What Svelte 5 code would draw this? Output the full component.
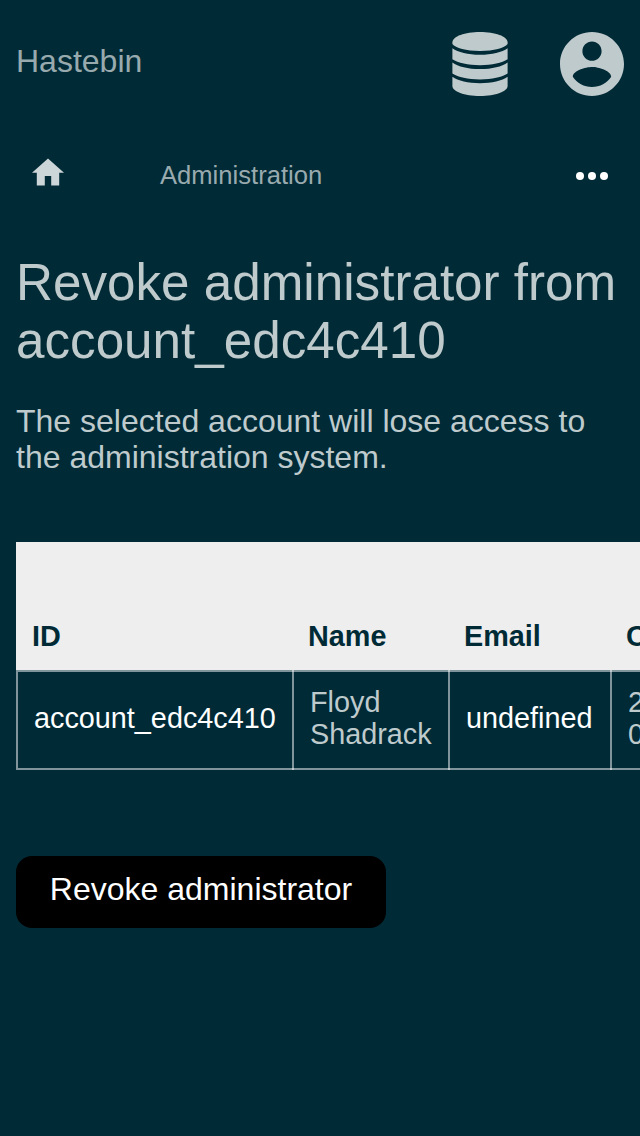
<script>
  const account = { id: 'account_edc4c410', name: 'Floyd Shadrack', email: 'undefined', created: '2023-01-02 03:42' };
</script>

<div class="page">
  <header>
    <span class="brand">Hastebin</span>
    <div class="tools">
      <svg width="56" height="64" viewBox="0 0 56 64" aria-label="Storage">
        <path d="M28 0C13 0 .4 4.2.4 10.5v1.6C3.5 16 14 19.1 28 19.1S52.5 16 55.6 12.1v-1.6C55.6 4.2 43 0 28 0Z" />
        <path d="M.4 16.2C6 20.3 16 22.7 28 22.7s22-2.4 27.6-6.5v11.1c-5.6 3.7-15.6 5.9-27.6 5.9S6 31 .4 27.3Z" />
        <path d="M.4 30.5c5.6 4.1 15.6 6.6 27.6 6.6s22-2.5 27.6-6.6v11c-5.6 3.7-15.6 5.9-27.6 5.9S6 45.2.4 41.5Z" />
        <path d="M.4 44.8C6 48.9 16 51.2 28 51.2s22-2.3 27.6-6.4V54c0 5.4-12 10-27.6 10S.4 59.4.4 54Z" />
      </svg>
      <svg width="64" height="64" viewBox="2 2 20 20" aria-label="Account">
        <path d="M12 2C6.48 2 2 6.48 2 12s4.48 10 10 10 10-4.48 10-10S17.52 2 12 2zm0 3c1.66 0 3 1.34 3 3s-1.34 3-3 3-3-1.34-3-3 1.34-3 3-3zm0 14.2c-2.5 0-4.71-1.28-6-3.22.03-1.99 4-3.08 6-3.08 1.99 0 5.97 1.09 6 3.08-1.29 1.94-3.5 3.22-6 3.22z" />
      </svg>
    </div>
  </header>

  <nav>
    <svg class="home" width="32" height="28" viewBox="2 2.75 20 17.5" aria-label="Home">
      <path d="M10 20v-6h4v6h5v-8h3L12 3 2 12h3v8z" />
    </svg>
    <span class="crumb">Administration</span>
    <svg class="more" width="32" height="8" viewBox="0 0 32 8" aria-label="More">
      <circle cx="4" cy="4" r="4" /><circle cx="16" cy="4" r="4" /><circle cx="28" cy="4" r="4" />
    </svg>
  </nav>

  <main>
    <h1>Revoke administrator from account_edc4c410</h1>
    <p>The selected account will lose access to the administration system.</p>
    <div class="scroller">
      <div class="table">
        <div class="head">
          <span>ID</span><span>Name</span><span>Email</span><span>Created</span>
        </div>
        <div class="row">
          <div class="cell link">{account.id}</div>
          <div class="cell">{account.name}</div>
          <div class="cell link">{account.email}</div>
          <div class="cell">{account.created}</div>
        </div>
      </div>
    </div>
    <button>Revoke administrator</button>
  </main>
</div>

<style>
  :global(body) { background: #002b36; }
  .page {
    box-sizing: border-box;
    min-height: 1136px;
    overflow: hidden;
    background: #002b36;
    color: #bfcacd;
    font: 32px/36px "Liberation Sans", Arial, sans-serif;
  }
  svg { display: block; fill: currentColor; }
  header {
    display: flex;
    justify-content: space-between;
    padding: 32px 16px 0;
    height: 96px;
  }
  .brand { padding-top: 11px; color: #99aaaf; }
  .tools { display: flex; gap: 52px; }
  nav {
    display: flex;
    align-items: center;
    height: 96px;
    padding: 0 32px;
  }
  .home { color: #ccd5d7; margin-top: -8px; }
  .crumb { margin: -2px 0 0 96px; font-size: 25.6px; color: #99aaaf; }
  .more { margin-left: auto; color: #fff; }
  main { padding: 30px 0 0 16px; }
  h1 { margin: 0; font-size: 51.2px; line-height: 58px; font-weight: 400; }
  p { margin: 33px 0 0; width: 608px; }
  .scroller { margin-top: 67px; overflow: hidden; }
  .table { width: 768px; font-size: 28.8px; line-height: 32px; }
  .head, .row { display: grid; grid-template-columns: 276px 156px 162px 174px; }
  .head {
    box-sizing: border-box;
    height: 128px;
    padding-bottom: 18px;
    align-items: end;
    background: #eee;
    color: #002b36;
    font-weight: 700;
  }
  .head span { padding-left: 16px; }
  .row {
    box-sizing: border-box;
    height: 100px;
    border-top: 2px solid rgb(255 255 255 / .5);
    border-bottom: 2px solid rgb(255 255 255 / .5);
    border-left: 2px solid rgb(255 255 255 / .5);
    background: #002b36;
    grid-template-columns: 274px 156px 162px 174px;
  }
  .cell {
    display: flex;
    align-items: center;
    margin: -2px 0;
    padding: 0 16px 4px;
    border-left: 2px solid rgb(255 255 255 / .5);
  }
  .cell:first-child { border-left: 0; }
  .link { color: #fff; }
  button {
    display: block;
    margin-top: 86px;
    width: 370px;
    height: 72px;
    padding: 0 0 6px;
    border: 0;
    border-radius: 16px;
    background: #000;
    color: #fff;
    font: inherit;
  }
</style>
